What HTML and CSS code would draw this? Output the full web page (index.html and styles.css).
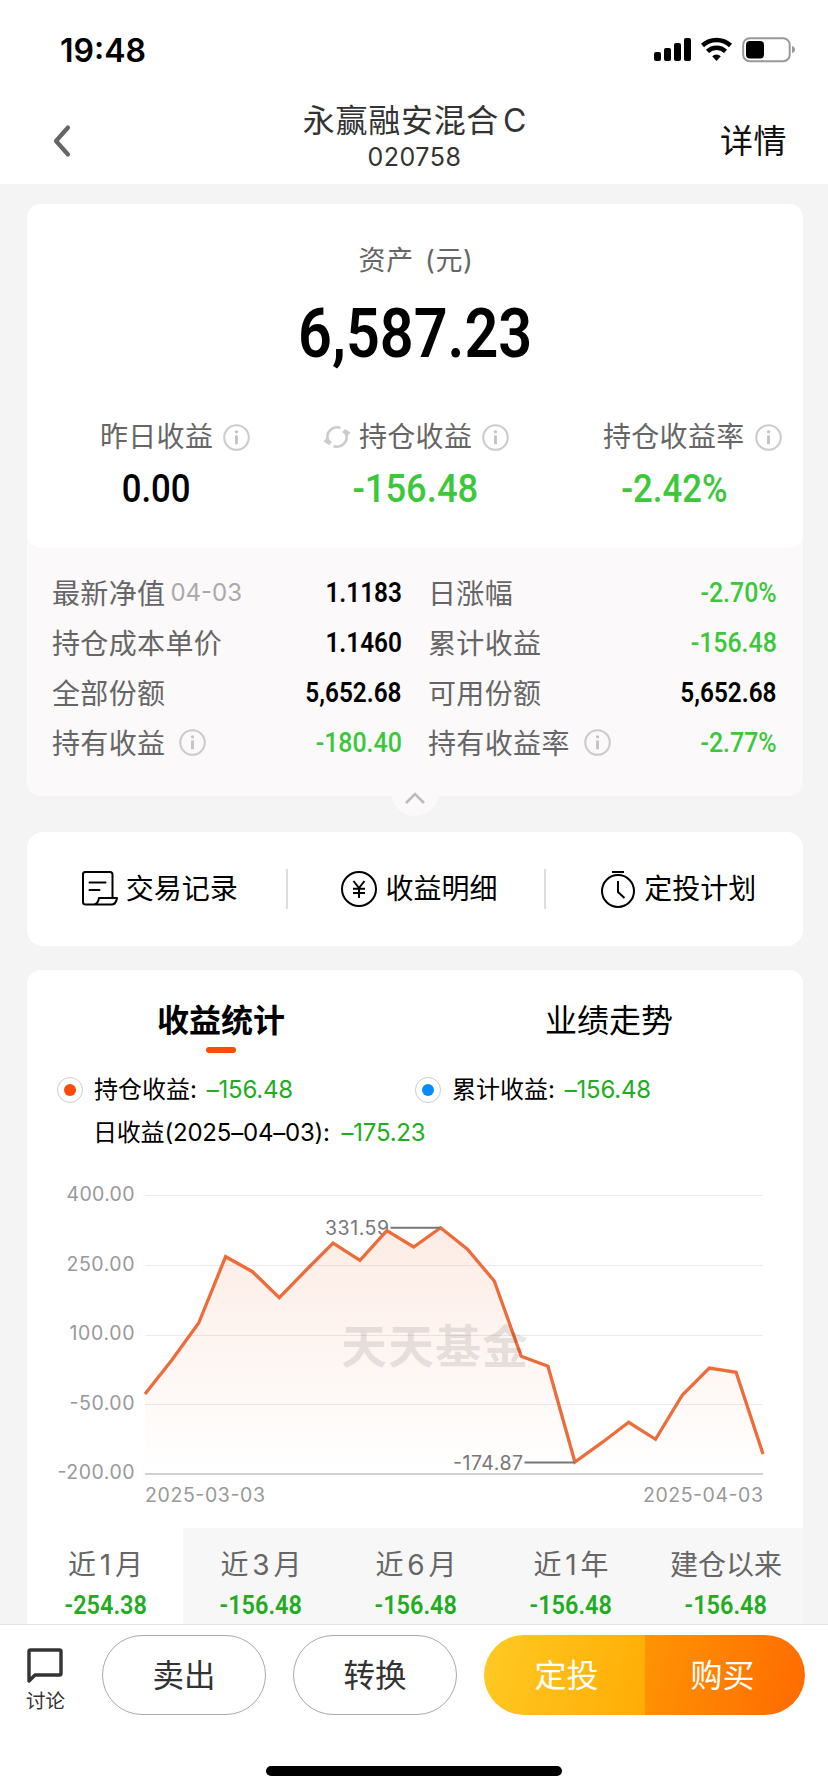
FILE: index.html
```html
<!DOCTYPE html>
<html lang="zh-CN">
<head>
<meta charset="utf-8">
<title>永赢融安混合C</title>
<link rel="stylesheet" href="styles.css">
</head>
<body>
<svg class="defs" width="0" height="0">
  <symbol id="info" viewBox="0 0 26 26"><circle cx="13" cy="13" r="11.8" fill="none" stroke="#ccc" stroke-width="2"/><circle cx="13" cy="7.5" r="1.6" fill="#c4c4c4"/><path d="M13 11v8.500" stroke="#c4c4c4" stroke-width="2.800"/></symbol>
</svg>
<div class="screen">
  <div class="status">
    <span class="clock">19:48</span>
    <svg class="status-icons" width="142" height="26" viewBox="0 0 142 26">
      <rect x="0" y="15" width="7" height="9" rx="2"/><rect x="10" y="11" width="7" height="13" rx="2"/><rect x="20" y="6" width="7" height="18" rx="2"/><rect x="30" y="1" width="7" height="23" rx="2"/>
      <path d="M48.500 8.500a20.500 20.500 0 0 1 28 0" fill="none" stroke="#000" stroke-width="4.600"/>
      <path d="M53.500 14.300a13 13 0 0 1 18 0" fill="none" stroke="#000" stroke-width="4.400"/>
      <path d="M58.200 19.200a6.500 6.500 0 0 1 8.600 0L62.500 24z"/>
      <rect x="89.200" y="1.200" width="46.500" height="23" rx="6.500" fill="none" stroke="#999" stroke-width="2"/>
      <rect x="92" y="4" width="18" height="17.500" rx="4"/>
      <path d="M138 9q3 1 3 3.500t-3 3.500z" fill="#999"/>
    </svg>
  </div>
  <header class="nav">
    <svg class="back" width="22" height="36" viewBox="0 0 22 36"><path d="M17 4.500 5 18l12 13.500" fill="none" stroke="#666" stroke-width="4.200" stroke-linecap="round" stroke-linejoin="round"/></svg>
    <div class="nav-title"><h1>永赢融安混合<span class="cls">C</span></h1><p>020758</p></div>
    <a class="detail">详情</a>
  </header>

  <main class="content">
    <section class="asset">
      <div class="asset-top">
        <div class="asset-label">资产 (元)</div>
        <div class="asset-amount"><span class="din">6,587.23</span></div>
        <div class="summary">
          <div class="sum sum-a"><div class="sum-label">昨日收益<svg class="info"><use href="#info"/></svg></div><div class="sum-value"><span class="din">0.00</span></div></div>
          <div class="sum sum-b"><div class="sum-label"><svg class="refresh" width="28" height="26" viewBox="0 0 28 26"><g fill="none" stroke="#ccc" stroke-width="2.600"><path d="M5 16A9.500 9.500 0 0 1 17.500 4M23 10A9.500 9.500 0 0 1 10.500 22"/></g><path d="M.500 17.500 4 13.500l5 4.500-3 3zM27.500 8.500 24 12.500 19 8l3-3z" fill="#ccc"/></svg>持仓收益<svg class="info"><use href="#info"/></svg></div><div class="sum-value green"><span class="din">-156.48</span></div></div>
          <div class="sum sum-c"><div class="sum-label">持仓收益率<svg class="info"><use href="#info"/></svg></div><div class="sum-value green"><span class="din">-2.42%</span></div></div>
        </div>
      </div>
      <div class="facts">
        <div class="fact"><span>最新净值<small>04-03</small></span><b class="din">1.1183</b></div>
        <div class="fact"><span>日涨幅</span><b class="din green">-2.70%</b></div>
        <div class="fact"><span>持仓成本单价</span><b class="din">1.1460</b></div>
        <div class="fact"><span>累计收益</span><b class="din green">-156.48</b></div>
        <div class="fact"><span>全部份额</span><b class="din">5,652.68</b></div>
        <div class="fact"><span>可用份额</span><b class="din">5,652.68</b></div>
        <div class="fact"><span>持有收益<svg class="info"><use href="#info"/></svg></span><b class="din green">-180.40</b></div>
        <div class="fact"><span>持有收益率<svg class="info"><use href="#info"/></svg></span><b class="din green">-2.77%</b></div>
      </div>
      <div class="fold"><svg width="22" height="14" viewBox="0 0 22 14"><path d="M2 12 11 3l9 9" fill="none" stroke="#bbb" stroke-width="2.600"/></svg></div>
    </section>

    <section class="links">
      <a class="link"><svg width="38" height="38" viewBox="0 0 38 38" fill="none" stroke="#000" stroke-width="2" stroke-linejoin="round" stroke-linecap="round"><path d="M31.500 28V4.500Q31.500 2 29 2H4Q2 2 2 4.500V32q0 2.500 2.500 2.500H13q4-.5 5-6.500h18q-1 6.500-5.500 6.500H13"/><path d="M8.500 12.500h16M8.500 20h10"/></svg>交易记录</a>
      <a class="link"><svg width="38" height="38" viewBox="0 0 38 38" fill="none" stroke="#000" stroke-width="2"><circle cx="19" cy="19" r="17"/><path d="m13.500 11 5.500 7 5.500-7M19 18v10M13 18.700h12M13 23h12"/></svg>收益明细</a>
      <a class="link"><svg width="38" height="38" viewBox="0 0 38 38" fill="none" stroke="#000" stroke-width="2"><circle cx="19" cy="21" r="16"/><path d="M13 2h12M19 11v11l6.500 6"/></svg>定投计划</a>
    </section>

    <section class="stats">
      <div class="tabs"><a class="tab active">收益统计</a><a class="tab">业绩走势</a></div>
      <div class="legend">
        <div class="key"><i class="dot red"></i><span>持仓收益: <em>–156.48</em></span></div>
        <div class="key"><i class="dot blue"></i><span>累计收益: <em>–156.48</em></span></div>
        <div class="key day"><span>日收益(2025–04–03): <em>–175.23</em></span></div>
      </div>
      <svg class="chart" width="776" height="350" viewBox="27 1178 776 350">
        <defs><linearGradient id="fill" gradientUnits="userSpaceOnUse" x1="0" y1="1227" x2="0" y2="1474"><stop offset="0" stop-color="#ee6a36" stop-opacity=".13"/><stop offset="1" stop-color="#ee6a36" stop-opacity="0"/></linearGradient></defs>
        <path d="M145 1195.500H763M145 1265.500H763M145 1335.500H763M145 1404.500H763" stroke="#ebebeb" stroke-width="1.200"/>
        <path d="M145 1474H763" stroke="#d2d2d2" stroke-width="2"/>
        <path fill="url(#fill)" d="M145 1394 171.900 1360 198.700 1323 225.600 1256.700 252.500 1271.700 279.300 1297.700 306.200 1270 333.100 1243 360 1260.300 386.800 1230.700 413.700 1247 440.600 1227.700 467.400 1249.300 494.300 1281 521.200 1356.300 548 1366.300 574.900 1462 601.800 1442.700 628.700 1422.300 655.500 1439.300 682.400 1395 709.300 1368 736.100 1372.300 763 1454V1474H145z"/>
        <g class="axis" text-anchor="end"><text x="134.500" y="1200.500" textLength="68">400.00</text><text x="134.500" y="1270.500" textLength="68">250.00</text><text x="134.500" y="1340" textLength="65">100.00</text><text x="134.500" y="1409.500" textLength="65">-50.00</text><text x="134.500" y="1478.500" textLength="77">-200.00</text><text x="763" y="1501.500" textLength="120">2025-04-03</text></g>
        <text class="axis" x="145" y="1501.500" textLength="120">2025-03-03</text>
        <text class="mark" x="325" y="1234.500" textLength="64">331.59</text><text class="mark" x="453" y="1469.500" textLength="70">-174.87</text>
        <path fill="none" stroke="#ee6c3a" stroke-width="3.300" d="M145 1394 171.900 1360 198.700 1323 225.600 1256.700 252.500 1271.700 279.300 1297.700 306.200 1270 333.100 1243 360 1260.300 386.800 1230.700 413.700 1247 440.600 1227.700 467.400 1249.300 494.300 1281 521.200 1356.300 548 1366.300 574.900 1462 601.800 1442.700 628.700 1422.300 655.500 1439.300 682.400 1395 709.300 1368 736.100 1372.300 763 1454"/>
        <path d="M390.500 1227.700H440M524.500 1462.500H575" stroke="#777" stroke-width="2"/>
        <text class="watermark" x="341" y="1363" textLength="187">天天基金</text>
      </svg>
      <div class="periods">
        <div class="period on"><span>近 1 月</span><b class="din">-254.38</b></div>
        <div class="period"><span>近 3 月</span><b class="din">-156.48</b></div>
        <div class="period"><span>近 6 月</span><b class="din">-156.48</b></div>
        <div class="period"><span>近 1 年</span><b class="din">-156.48</b></div>
        <div class="period"><span>建仓以来</span><b class="din">-156.48</b></div>
      </div>
    </section>
  </main>

  <footer class="actions">
    <div class="action-row">
      <a class="talk"><svg width="38" height="38" viewBox="0 0 38 38"><path d="M3 34V4.500Q3 3 4.500 3h29Q35 3 35 4.500v22q0 1.500-1.500 1.500H9z" fill="none" stroke="#333" stroke-width="3.400" stroke-linejoin="round"/></svg>讨论</a>
      <a class="pill">卖出</a>
      <a class="pill">转换</a>
      <div class="buy"><a>定投</a><a>购买</a></div>
    </div>
    <div class="home"></div>
  </footer>
</div>
</body>
</html>
```
FILE: styles.css
```css
* { box-sizing: border-box; }
body { margin: 0; background: #f4f4f4; font-family: "Inter", "Noto Sans CJK SC", sans-serif; color: #000; }
h1, p { margin: 0; font-weight: 400; }
.defs { position: absolute; }
.screen { width: 828px; height: 1792px; display: flex; flex-direction: column; overflow: hidden; }

.status { height: 98px; flex: none; background: #fff; display: flex; justify-content: space-between; align-items: center; padding: 1px 32px 0 60px; }
.clock { font-size: 32px; font-weight: 600; line-height: 40px; margin-top: 2px; }
.status-icons { margin-top: 1px; }

.nav { height: 86px; flex: none; background: #fff; display: grid; grid-template-columns: 200px 1fr 200px; align-items: center; }
.back { margin-left: 51px; }
.nav-title { text-align: center; color: #333; }
.nav-title h1 { font-size: 32px; letter-spacing: .7px; line-height: 42px; margin-top: -9px; padding-left: 2px; }
.cls { margin-left: 4px; }
.nav-title p { font-size: 25px; line-height: 30px; margin-bottom: 2px; padding-left: 1px; letter-spacing: .5px; }
.detail { justify-self: end; margin-right: 41px; font-size: 33px; letter-spacing: .5px; line-height: 40px; color: #111; }

.content { flex: 1; min-height: 0; overflow: hidden; padding: 20px 25px 0 27px; display: flex; flex-direction: column; }
.content > section { flex: none; }

.din { font-family: "Roboto", sans-serif; font-weight: 500; display: inline-block; transform: scaleX(.88); }
.green { color: #3bc83b; }
.info { width: 27px; height: 27px; flex: none; margin-left: 10px; }

.asset { background: #fbf9fa; border-radius: 14px; height: 592px; position: relative; }
.asset-top { background: #fff; border-radius: 14px; height: 344px; padding-top: 36px; }
.asset-label { text-align: center; font-size: 27px; line-height: 40px; color: #666; letter-spacing: .6px; word-spacing: 3px; padding-left: 2px; margin-top: 1px; }
.asset-amount { text-align: center; font-size: 69px; line-height: 80px; margin-top: 11px; }
.asset-amount .din { font-weight: 600; transform: scaleX(.86); }
.summary { display: grid; grid-template-columns: 259px 259px 258px; margin-top: 43px; }
.sum-label { display: flex; align-items: center; font-size: 28px; letter-spacing: .3px; line-height: 40px; color: #666; white-space: nowrap; }
.sum-value { font-size: 39.500px; line-height: 48px; margin-top: 7px; text-align: center; }
.sum-a .sum-label { padding-left: 73px; }
.sum-b .sum-label { padding-left: 37px; }
.sum-c .sum-label { padding-left: 58px; }
.sum-b .sum-value .din { transform: scaleX(.92); }
.refresh { margin-right: 8px; }

.facts { display: grid; grid-template-columns: 350px 349px; column-gap: 26px; padding: 19px 25px 0; }
.fact { display: flex; justify-content: space-between; align-items: center; height: 50px; font-size: 28px; letter-spacing: .35px; color: #666; }
.fact span { display: flex; align-items: center; }
.fact small { font-size: 24px; color: #aaa; margin-left: 5px; letter-spacing: 0; }
.fact .info { margin-left: 14px; }
.fact .din { color: #000; font-weight: 600; transform-origin: right; transform: scaleX(.87); font-size: 28px; letter-spacing: 0; }
.fact .din.green { color: #3bc83b; font-weight: 500; transform: scaleX(.89); }
.fold { position: absolute; left: 364px; top: 564px; width: 48px; height: 48px; border-radius: 50%; background: #fbf9fa; display: flex; justify-content: center; padding-top: 23px; }

.links { height: 114px; margin-top: 36px; background: #fff; border-radius: 16px; display: grid; grid-template-columns: 1fr 1fr 1fr; align-items: center; }
.link { height: 40px; display: flex; align-items: center; justify-content: center; gap: 7px; font-size: 28px; line-height: 38px; padding: 0 0 0 6px; }
.link + .link { border-left: 2px solid #ddd; }

.stats { margin-top: 24px; background: #fff; border-radius: 14px 14px 0 0; }
.tabs { display: grid; grid-template-columns: 1fr 1fr; height: 98px; }
.tab { display: flex; flex-direction: column; align-items: center; font-size: 32px; line-height: 42px; padding-top: 30px; }
.active { font-weight: 700; }
.active::after { content: ""; width: 30px; height: 6px; border-radius: 3px; background: #fb4a0a; margin-top: 5px; }
.legend { display: grid; grid-template-columns: 358px 1fr; padding: 0 0 12px 30px; }
.key { display: flex; align-items: center; height: 44px; font-size: 24px; line-height: 32px; white-space: pre; }
.key span { margin-top: -1px; }
.key em { font-style: normal; color: #22ac22; letter-spacing: -.2px; margin-left: 3px; }
.dot { width: 26px; height: 26px; border: 1px solid #ccc; border-radius: 50%; margin-right: 11px; display: flex; align-items: center; justify-content: center; }
.dot::before { content: ""; width: 12px; height: 12px; border-radius: 50%; background: #fb4a0a; }
.blue::before { background: #0a8afa; }
.day { grid-column: 1 / 3; padding-left: 36px; height: 42px; letter-spacing: -.2px; }
.day em { margin-left: 5px; }
.chart { display: block; margin-top: 12px; }
.axis { font-size: 19.500px; fill: #999; }
.mark { font-size: 19.500px; fill: #777; }
.watermark { font-size: 46px; font-weight: 700; fill: #000; fill-opacity: .11; }

.periods { display: grid; grid-template-columns: 156px 155px 155px 155px 155px; background: #f7f7f7; height: 110px; }
.period { display: flex; flex-direction: column; align-items: center; padding: 17px 0 0 1px; font-size: 28px; line-height: 40px; color: #666; word-spacing: -4px; }
.on { background: #fff; }
.period .din { font-size: 25.500px; font-weight: 600; line-height: 40px; color: #22ac22; transform: scaleX(.92); }

.actions { height: 168px; flex: none; background: #fff; border-top: 1px solid #e4e4e4; }
.action-row { display: flex; padding: 10px 23px 0 26px; }
.talk { width: 76px; height: 80px; padding-top: 12px; font-size: 19.500px; line-height: 28px; color: #333; display: flex; flex-direction: column; }
.talk svg { margin-bottom: 2px; }
.pill { width: 164px; height: 80px; border: 1px solid #aaa; border-radius: 40px; margin-right: 27px; display: flex; align-items: center; justify-content: center; font-size: 31.500px; color: #333; padding-bottom: 4px; }
.buy { width: 321px; height: 80px; border-radius: 40px; overflow: hidden; display: grid; grid-template-columns: 161px 160px; }
.buy a { display: flex; align-items: center; justify-content: center; color: #fff; font-size: 32px; padding-bottom: 4px; background: linear-gradient(105deg, #ffca24, #ffac04); }
.buy a:last-child { background: linear-gradient(105deg, #ff9404, #ff6a00); padding-right: 5px; }
.buy a:first-child { padding-left: 4px; }
.home { width: 296px; height: 10px; border-radius: 5px; background: #000; margin: 51px auto 0; }
```
